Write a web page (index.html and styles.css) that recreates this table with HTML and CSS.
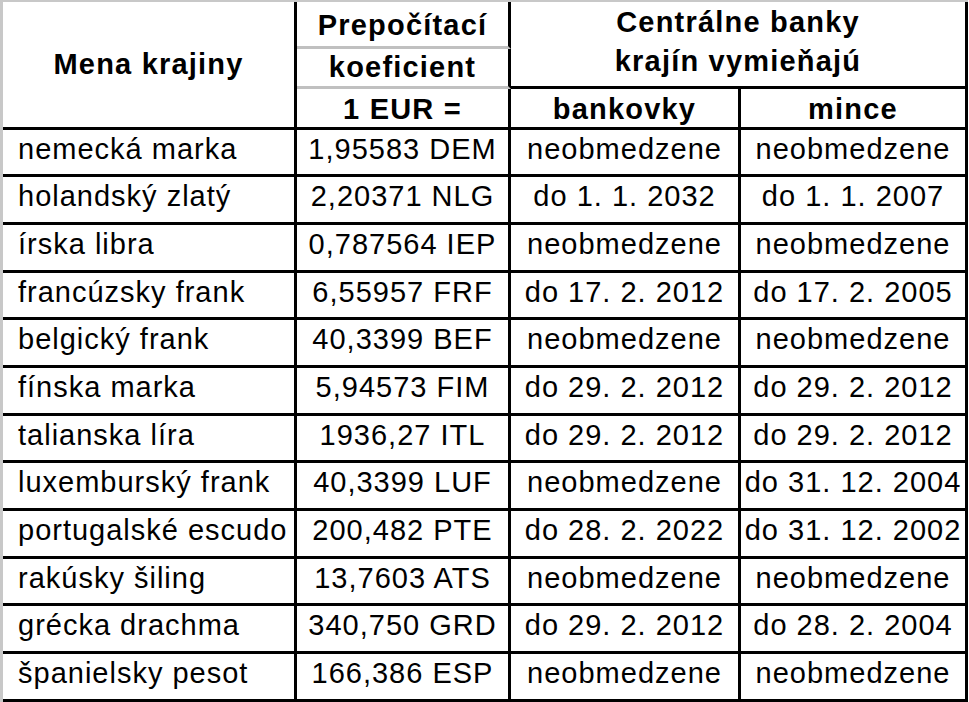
FILE: index.html
```html
<!DOCTYPE html>
<html lang="sk">
<head>
<meta charset="utf-8">
<title>Prepočítacie koeficienty</title>
<link rel="stylesheet" href="styles.css">
</head>
<body>
<div class="sheet">
  <div class="cell head name">Mena krajiny</div>
  <div class="cell head coef1 soft">Prepočítací</div>
  <div class="cell head coef2 soft">koeficient</div>
  <div class="cell head coef3">1 EUR =</div>
  <div class="cell head banks"><span>Centrálne banky<br>krajín vymieňajú</span></div>
  <div class="cell head sub">bankovky</div>
  <div class="cell head sub last">mince</div>

  <div class="cell left">nemecká marka</div><div class="cell">1,95583 DEM</div><div class="cell">neobmedzene</div><div class="cell last">neobmedzene</div>
  <div class="cell left">holandský zlatý</div><div class="cell">2,20371 NLG</div><div class="cell">do 1. 1. 2032</div><div class="cell last">do 1. 1. 2007</div>
  <div class="cell left">írska libra</div><div class="cell">0,787564 IEP</div><div class="cell">neobmedzene</div><div class="cell last">neobmedzene</div>
  <div class="cell left">francúzsky frank</div><div class="cell">6,55957 FRF</div><div class="cell">do 17. 2. 2012</div><div class="cell last">do 17. 2. 2005</div>
  <div class="cell left">belgický frank</div><div class="cell">40,3399 BEF</div><div class="cell">neobmedzene</div><div class="cell last">neobmedzene</div>
  <div class="cell left">fínska marka</div><div class="cell">5,94573 FIM</div><div class="cell">do 29. 2. 2012</div><div class="cell last">do 29. 2. 2012</div>
  <div class="cell left">talianska líra</div><div class="cell">1936,27 ITL</div><div class="cell">do 29. 2. 2012</div><div class="cell last">do 29. 2. 2012</div>
  <div class="cell left">luxemburský frank</div><div class="cell">40,3399 LUF</div><div class="cell">neobmedzene</div><div class="cell last">do 31. 12. 2004</div>
  <div class="cell left">portugalské escudo</div><div class="cell">200,482 PTE</div><div class="cell">do 28. 2. 2022</div><div class="cell last">do 31. 12. 2002</div>
  <div class="cell left">rakúsky šiling</div><div class="cell">13,7603 ATS</div><div class="cell">neobmedzene</div><div class="cell last">neobmedzene</div>
  <div class="cell left">grécka drachma</div><div class="cell">340,750 GRD</div><div class="cell">do 29. 2. 2012</div><div class="cell last">do 28. 2. 2004</div>
  <div class="cell left">španielsky pesot</div><div class="cell">166,386 ESP</div><div class="cell">neobmedzene</div><div class="cell last">neobmedzene</div>
</div>
</body>
</html>
```

FILE: styles.css
```css
html, body {
  margin: 0;
  padding: 0;
  background: #ffffff;
}

.sheet {
  display: grid;
  grid-template-columns: 294px 214px 230px 227px;
  grid-template-rows: 46.5px 40px 41px repeat(12, 47.7px);
  width: max-content;
  border-top: 2px solid #c8c8c8;
  border-left: 3px solid #c8c8c8;
  font-family: "Liberation Sans", Arial, sans-serif;
  font-size: 29px;
  letter-spacing: 1px;
  color: #000;
}

.cell {
  box-sizing: border-box;
  display: flex;
  align-items: center;
  justify-content: center;
  white-space: nowrap;
  border-right: 3px solid #000;
  border-bottom: 3px solid #000;
  padding-bottom: 6px;
  line-height: 1.12;
}

.cell.left {
  justify-content: flex-start;
  padding-left: 15px;
}

.head {
  font-weight: 700;
  letter-spacing: 1.2px;
  padding-bottom: 0;
}

.name {
  grid-column: 1;
  grid-row: 1 / 4;
}

.coef1 {
  grid-column: 2;
  grid-row: 1;
  padding-top: 2px;
}

.coef2 {
  grid-column: 2;
  grid-row: 2;
  padding-top: 1px;
}

.coef3 {
  grid-column: 2;
  grid-row: 3;
  padding-top: 3px;
}

.soft {
  border-bottom-color: #c0c0c0;
}

.banks {
  grid-column: 3 / 5;
  grid-row: 1 / 3;
  text-align: center;
  line-height: 39px;
  padding-bottom: 4px;
}

.sub {
  grid-row: 3;
  padding-top: 3px;
}
```
